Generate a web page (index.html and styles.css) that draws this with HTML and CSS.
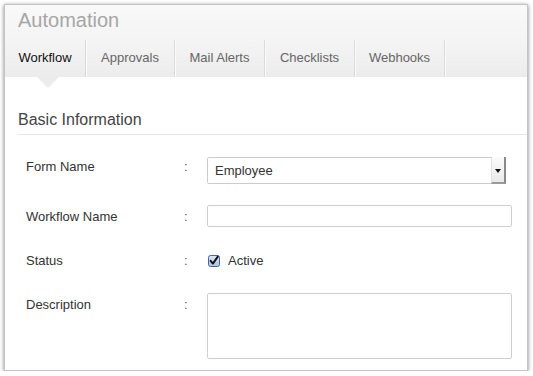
FILE: index.html
```html
<!DOCTYPE html>
<html>
<head>
<meta charset="utf-8">
<link rel="stylesheet" href="styles.css">
</head>
<body>
<div class="panel">
  <div class="header">
    <div class="title">Automation</div>
    <div class="tabs">
      <div class="tab tab-active w1">Workflow<span class="pointer"></span></div>
      <div class="tab w2">Approvals</div>
      <div class="tab w3">Mail Alerts</div>
      <div class="tab w3">Checklists</div>
      <div class="tab w3">Webhooks</div>
    </div>
  </div>
  <div class="section-title">Basic Information</div>
  <div class="form">
    <div class="row row-select">
      <div class="label">Form Name</div>
      <div class="colon">:</div>
      <div class="select">
        <span class="select-text">Employee</span>
        <span class="select-btn"><span class="arrow"></span></span>
      </div>
    </div>
    <div class="row row-input">
      <div class="label">Workflow Name</div>
      <div class="colon">:</div>
      <div class="input"></div>
    </div>
    <div class="row row-check">
      <div class="label">Status</div>
      <div class="colon">:</div>
      <div class="check">
        <svg class="checkbox" width="12" height="12" viewBox="0 0 12 12">
          <defs>
            <linearGradient id="cb" x1="0" y1="0" x2="0" y2="1">
              <stop offset="0" stop-color="#dbe6f7"/>
              <stop offset="1" stop-color="#a9c1e6"/>
            </linearGradient>
          </defs>
          <rect x="0.5" y="0.5" width="11" height="11" rx="2" fill="url(#cb)" stroke="#46679b"/>
          <path d="M2.6 5.8 L4.9 8.6 L9.8 1.6" fill="none" stroke="#111" stroke-width="1.9" stroke-linecap="round" stroke-linejoin="round"/>
        </svg>
        <span class="check-text">Active</span>
      </div>
    </div>
    <div class="row row-text">
      <div class="label">Description</div>
      <div class="colon">:</div>
      <div class="textarea"></div>
    </div>
  </div>
</div>
</body>
</html>
```
FILE: styles.css
```css
html, body {
  margin: 0;
  padding: 0;
  background: #ffffff;
}
body {
  font-family: "Liberation Sans", Arial, sans-serif;
  color: #333;
}
.panel {
  box-sizing: border-box;
  width: 524px;
  height: 367px;
  margin: 4px 0 0 4px;
  border: 1px solid #c4c4c4;
  box-shadow: 0 1px 4px rgba(0, 0, 0, 0.5);
  background: #fff;
  overflow: hidden;
}
.header {
  background: linear-gradient(to bottom, #f9f9f9 0%, #f4f4f4 50%, #ececec 100%);
}
.title {
  height: 35px;
  box-sizing: border-box;
  padding: 3px 0 0 13px;
  font-size: 20px;
  line-height: 24px;
  color: #a6a6a6;
}
.tabs {
  display: flex;
  height: 37px;
}
.tab {
  position: relative;
  box-sizing: border-box;
  height: 37px;
  line-height: 35px;
  text-align: center;
  font-size: 13px;
  color: #666;
  border-right: 1px solid #dadada;
  box-shadow: 1px 0 0 #fbfbfb;
}
.tab-active {
  color: #111;
}
.w1 { width: 81px; }
.w2 { width: 89px; }
.w3 { width: 90px; }
.pointer {
  position: absolute;
  left: 32px;
  top: 37px;
  width: 0;
  height: 0;
  border-left: 11px solid transparent;
  border-right: 11px solid transparent;
  border-top: 11px solid #ececec;
}
.section-title {
  margin: 33px 0 0 13px;
  padding-bottom: 4px;
  font-size: 16px;
  line-height: 20px;
  color: #444;
  border-bottom: 1px solid #e6e6e6;
}
.form {
  padding: 22px 0 0 21px;
}
.row {
  display: flex;
  align-items: flex-start;
  font-size: 13px;
  line-height: 16px;
}
.label {
  width: 158px;
  color: #333;
}
.colon {
  width: 23px;
  color: #555;
}
.row-select { height: 27px; margin-bottom: 21px; }
.row-select .label, .row-select .colon { padding-top: 2px; }
.row-input { height: 22px; margin-bottom: 26px; }
.row-input .label, .row-input .colon { padding-top: 4px; }
.row-check { height: 16px; margin-bottom: 24px; }
.row-text .label, .row-text .colon { padding-top: 4px; }

.select {
  box-sizing: border-box;
  width: 299px;
  height: 27px;
  border: 1px solid #c9cdd3;
  border-radius: 2px;
  display: flex;
  align-items: center;
  justify-content: space-between;
  background: #fff;
}
.select-text {
  padding-left: 7px;
  color: #333;
}
.select-btn {
  box-sizing: border-box;
  width: 15px;
  height: 27px;
  margin: -1px -1px -1px 0;
  background: linear-gradient(to bottom, #fbfbfb, #e9e9e9);
  border-left: 1px solid #e2e2e2;
  border-right: 2px solid #8a8a8a;
  border-bottom: 2px solid #9a9a9a;
  display: flex;
  align-items: center;
  justify-content: center;
}
.arrow {
  width: 0;
  height: 0;
  margin-top: 2px;
  border-left: 3px solid transparent;
  border-right: 3px solid transparent;
  border-top: 4px solid #111;
}
.input {
  box-sizing: border-box;
  width: 305px;
  height: 22px;
  border: 1px solid #ccd0d6;
  border-radius: 2px;
}
.check {
  display: flex;
  align-items: center;
  height: 16px;
  padding-left: 1px;
}
.checkbox {
  display: block;
}
.check-text {
  margin-left: 8px;
  color: #333;
}
.textarea {
  box-sizing: border-box;
  width: 305px;
  height: 66px;
  border: 1px solid #ccd0d6;
  border-radius: 2px;
}
```
